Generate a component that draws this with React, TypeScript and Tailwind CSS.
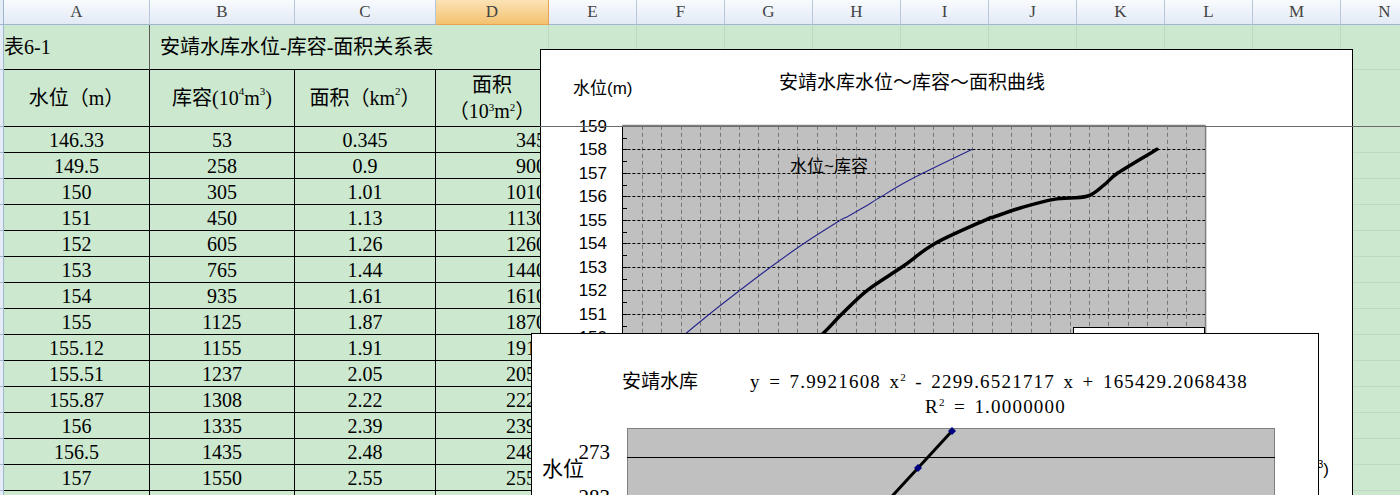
import React from "react";

const serif = "font-['Liberation_Serif','Noto_Sans_CJK_SC',serif]";
const sans = "font-['Liberation_Sans','Noto_Sans_CJK_SC',sans-serif]";

const LETTERS = ["A", "B", "C", "D", "E", "F", "G", "H", "I", "J", "K", "L", "M", "N"];
const WIDTHS = ["w-[146px]", "w-[145px]", "w-[141px]", "w-[113px]"];
const EXTRA = 10; // columns E..N

const rows = [
  ["146.33", "53", "0.345", "345"],
  ["149.5", "258", "0.9", "900"],
  ["150", "305", "1.01", "1010"],
  ["151", "450", "1.13", "1130"],
  ["152", "605", "1.26", "1260"],
  ["153", "765", "1.44", "1440"],
  ["154", "935", "1.61", "1610"],
  ["155", "1125", "1.87", "1870"],
  ["155.12", "1155", "1.91", "1910"],
  ["155.51", "1237", "2.05", "2050"],
  ["155.87", "1308", "2.22", "2220"],
  ["156", "1335", "2.39", "2390"],
  ["156.5", "1435", "2.48", "2480"],
  ["157", "1550", "2.55", "2550"],
  ["", "", "", ""],
];

// chart 1 scales (page coordinates)
const X = (v: number) => 622.4 + (v * 583.2) / 3000;
const Y = (l: number) => 125.8 + (159 - l) * 23.5;

const storage: [number, number][] = [
  [146.33, 53], [149.5, 258], [150, 305], [151, 450], [152, 605], [153, 765], [154, 935],
  [155, 1125], [155.12, 1155], [155.51, 1237], [155.87, 1308], [156, 1335], [156.5, 1435],
  [157, 1550], [158, 1800],
];
const area: [number, number][] = [
  [146.33, 345], [149.5, 900], [150, 1010], [151, 1130], [152, 1260], [153, 1440], [154, 1610],
  [155, 1870], [155.12, 1910], [155.51, 2050], [155.87, 2220], [156, 2390], [156.5, 2480],
  [157, 2550], [158, 2750],
];

function smooth(pts: [number, number][]) {
  let d = `M${pts[0][0].toFixed(1)},${pts[0][1].toFixed(1)}`;
  for (let i = 0; i < pts.length - 1; i++) {
    const p0 = pts[i - 1] || pts[i];
    const p1 = pts[i];
    const p2 = pts[i + 1];
    const p3 = pts[i + 2] || p2;
    const c1x = p1[0] + (p2[0] - p0[0]) / 6;
    const c1y = p1[1] + (p2[1] - p0[1]) / 6;
    const c2x = p2[0] - (p3[0] - p1[0]) / 6;
    const c2y = p2[1] - (p3[1] - p1[1]) / 6;
    d += ` C${c1x.toFixed(1)},${c1y.toFixed(1)} ${c2x.toFixed(1)},${c2y.toFixed(1)} ${p2[0].toFixed(1)},${p2[1].toFixed(1)}`;
  }
  return d;
}

function RowHead({ h }: { h: string }) {
  return <div className={`w-[4px] shrink-0 ${h} bg-[#E4ECF7] border-r border-b border-[#9EB6CE]`} />;
}

function Blank() {
  return (
    <>
      {Array.from({ length: EXTRA }).map((_, i) => (
        <div key={i} className="w-[88px] shrink-0 border-r border-b border-[#BFD8C6]" />
      ))}
    </>
  );
}

function Sup({ children }: { children: React.ReactNode }) {
  return <sup className="text-[11px] top-[-0.65em]">{children}</sup>;
}

function Chart1() {
  const top = Y(159);
  const bottom = Y(146);
  const vlines = Array.from({ length: 29 }, (_, i) => Math.round(622.4 + (i + 1) * 19.44) + 0.5);
  const levels = [159, 158, 157, 156, 155, 154, 153, 152, 151, 150, 149, 148, 147];
  return (
    <div className={`absolute left-[540px] top-[49px] w-[813px] h-[460px] border border-black bg-white ${sans}`}>
      <svg className="absolute left-0 top-0" width={811} height={458} viewBox="541 50 811 458">
        <defs>
          <clipPath id="plot1">
            <rect x={622.4} y={top} width={583.2} height={bottom - top} />
          </clipPath>
        </defs>
        <rect x={622.4} y={top} width={583.2} height={bottom - top} fill="#C0C0C0" />
        {vlines.map((x) => (
          <line key={x} x1={x} x2={x} y1={top} y2={bottom} stroke="#777" strokeDasharray="4 3" />
        ))}
        {levels.slice(1).map((l) => (
          <line key={l} x1={622.4} x2={1205.6} y1={Math.round(Y(l)) + 0.5} y2={Math.round(Y(l)) + 0.5} stroke="#000" strokeDasharray="3 2" />
        ))}
        <line x1={622.4} x2={1205.6} y1={top} y2={top} stroke="#808080" strokeWidth={2} />
        <line x1={1205.6} x2={1205.6} y1={top} y2={bottom} stroke="#808080" strokeWidth={1.5} />
        <line x1={622.5} x2={622.5} y1={top} y2={bottom} stroke="#000" />
        {Array.from({ length: 26 }, (_, i) => 159 - i * 0.5).map((l) => (
          <line key={l} x1={622} x2={627} y1={Math.round(Y(l)) + 0.5} y2={Math.round(Y(l)) + 0.5} stroke="#000" />
        ))}
        {levels.map((l) => (
          <text key={l} x={607} y={Y(l) + 6} textAnchor="end" fontSize={17} fontFamily="Liberation Sans, sans-serif" fill="#000">
            {l}
          </text>
        ))}
        <g clipPath="url(#plot1)">
          <path d={smooth(storage.map(([l, v]) => [X(v), Y(l)]))} fill="none" stroke="#26268C" strokeWidth={1.1} />
          <path d={smooth(area.map(([l, v]) => [X(v), Y(l)]))} fill="none" stroke="#000" strokeWidth={3.5} strokeLinecap="round" strokeLinejoin="round" />
        </g>
      </svg>
      <div className="absolute left-[238px] top-[22px] text-[19px] leading-[22px] whitespace-nowrap text-black">
        安靖水库水位～库容～面积曲线
      </div>
      <div className="absolute left-[32px] top-[29px] text-[17px] leading-[20px] whitespace-nowrap text-black">
        水位(m)
      </div>
      <div className="absolute left-[249px] top-[107px] text-[17px] leading-[20px] whitespace-nowrap text-black">
        水位~库容
      </div>
      <div className="absolute left-[532px] top-[277px] w-[132px] h-[60px] border border-black bg-white" />
      <div className="absolute right-[23px] top-[410px] text-[17px] leading-[20px] whitespace-nowrap text-black">
        库容(10<Sup>4</Sup>m<Sup>3</Sup>)
      </div>
    </div>
  );
}

function Chart2() {
  return (
    <div className="absolute left-[531px] top-[333px] w-[788px] h-[200px] border border-black bg-white">
      <div className={`absolute left-[90px] top-[37px] text-[19px] leading-[22px] whitespace-nowrap ${sans}`}>安靖水库</div>
      <div className={`absolute left-[218px] top-[37px] text-[19px] leading-[22px] whitespace-pre tracking-[1.2px] [word-spacing:2.5px] ${serif}`}>
        y = 7.9921608 x<Sup>2</Sup> - 2299.6521717 x + 165429.2068438
      </div>
      <div className={`absolute left-[393px] top-[62px] text-[19px] leading-[22px] whitespace-pre tracking-[1.2px] [word-spacing:2.5px] ${serif}`}>
        R<Sup>2</Sup> = 1.0000000
      </div>
      <div className="absolute left-[95px] top-[94px] w-[648px] h-[120px] bg-[#C0C0C0] border-t border-l border-r border-[#808080]" />
      <svg className="absolute left-0 top-0" width={786} height={198} viewBox="532 334 786 198">
        <line x1={627} x2={1275} y1={457.5} y2={457.5} stroke="#000" />
        <polyline points="952,431 918,468 860,531" fill="none" stroke="#000" strokeWidth={3} strokeLinejoin="round" />
        <polygon points="952,427 956,431 952,435 948,431" fill="#000080" />
        <polygon points="918,464 922,468 918,472 914,468" fill="#000080" />
      </svg>
      <div className={`absolute left-[10px] top-[123px] text-[21px] leading-[24px] ${sans}`}>水位</div>
      <div className={`absolute left-[30px] top-[106px] w-[48px] text-right text-[21px] leading-[24px] ${serif}`}>273</div>
      <div className={`absolute left-[30px] top-[151px] w-[48px] text-right text-[21px] leading-[24px] ${serif}`}>283</div>
    </div>
  );
}

export default function App() {
  return (
    <div className={`relative w-[1400px] h-[495px] overflow-hidden bg-[#CCE8CF] text-black ${serif}`}>
      {/* column letters */}
      <div className="flex h-[25px]">
        <div className="w-[4px] shrink-0 bg-[#E4ECF7] border-r border-b border-[#9EB6CE]" />
        {LETTERS.map((l, i) => (
          <div
            key={l}
            className={`${i < 4 ? WIDTHS[i] : "w-[88px]"} shrink-0 flex items-center justify-center text-[17px] text-[#444] border-r border-b ${
              l === "D"
                ? "bg-linear-to-b from-[#FBE2B4] to-[#F3C26F] border-[#E6A552]"
                : "bg-linear-to-b from-[#F9FBFD] to-[#E2EAF5] border-[#B5C6DD] border-b-[#9EB6CE]"
            }`}
          >
            {l}
          </div>
        ))}
      </div>

      {/* row 1: title */}
      <div className="flex h-[45px]">
        <RowHead h="h-[45px]" />
        <div className="w-[146px] shrink-0 flex items-center text-[20px] border-r border-r-[#5a5a5a] border-b border-b-black">表6-1</div>
        <div className="w-[145px] shrink-0 flex items-center pl-[10px] text-[20px] whitespace-nowrap border-b border-black">
          安靖水库水位-库容-面积关系表
        </div>
        <div className="w-[141px] shrink-0 border-b border-black" />
        <div className="w-[113px] shrink-0 border-b border-r border-black border-r-[#BFD8C6]" />
        <Blank />
      </div>

      {/* row 2: headers */}
      <div className="flex h-[57px] text-[20px]">
        <RowHead h="h-[57px]" />
        <div className="w-[146px] shrink-0 flex items-center justify-center border-r border-b border-black">水位（m）</div>
        <div className="w-[145px] shrink-0 flex items-center justify-center border-r border-b border-black whitespace-nowrap">
          库容(10<Sup>4</Sup>m<Sup>3</Sup>)
        </div>
        <div className="w-[141px] shrink-0 flex items-center justify-center border-r border-b border-black whitespace-nowrap">
          面积（km<Sup>2</Sup>）
        </div>
        <div className="w-[113px] shrink-0 flex flex-col items-center justify-center leading-[26px] border-r border-b border-black whitespace-nowrap">
          <span>面积</span>
          <span>（10<Sup>3</Sup>m<Sup>2</Sup>）</span>
        </div>
        <Blank />
      </div>

      {/* data rows */}
      {rows.map((r, idx) => (
        <div key={idx} className="flex h-[26px] text-[20px]">
          <RowHead h="h-[26px]" />
          <div className="w-[146px] shrink-0 flex items-center justify-center border-r border-b border-black">{r[0]}</div>
          <div className="w-[145px] shrink-0 flex items-center justify-center border-r border-b border-black">{r[1]}</div>
          <div className="w-[141px] shrink-0 flex items-center justify-center border-r border-b border-black">{r[2]}</div>
          <div className="w-[113px] shrink-0 flex items-center justify-end pr-[2px] border-r border-b border-black">{r[3]}</div>
          <Blank />
        </div>
      ))}

      <Chart1 />
      <div className="absolute left-[540px] right-0 top-[126px] h-px bg-[#6b6b6b]" />
      <Chart2 />
    </div>
  );
}
